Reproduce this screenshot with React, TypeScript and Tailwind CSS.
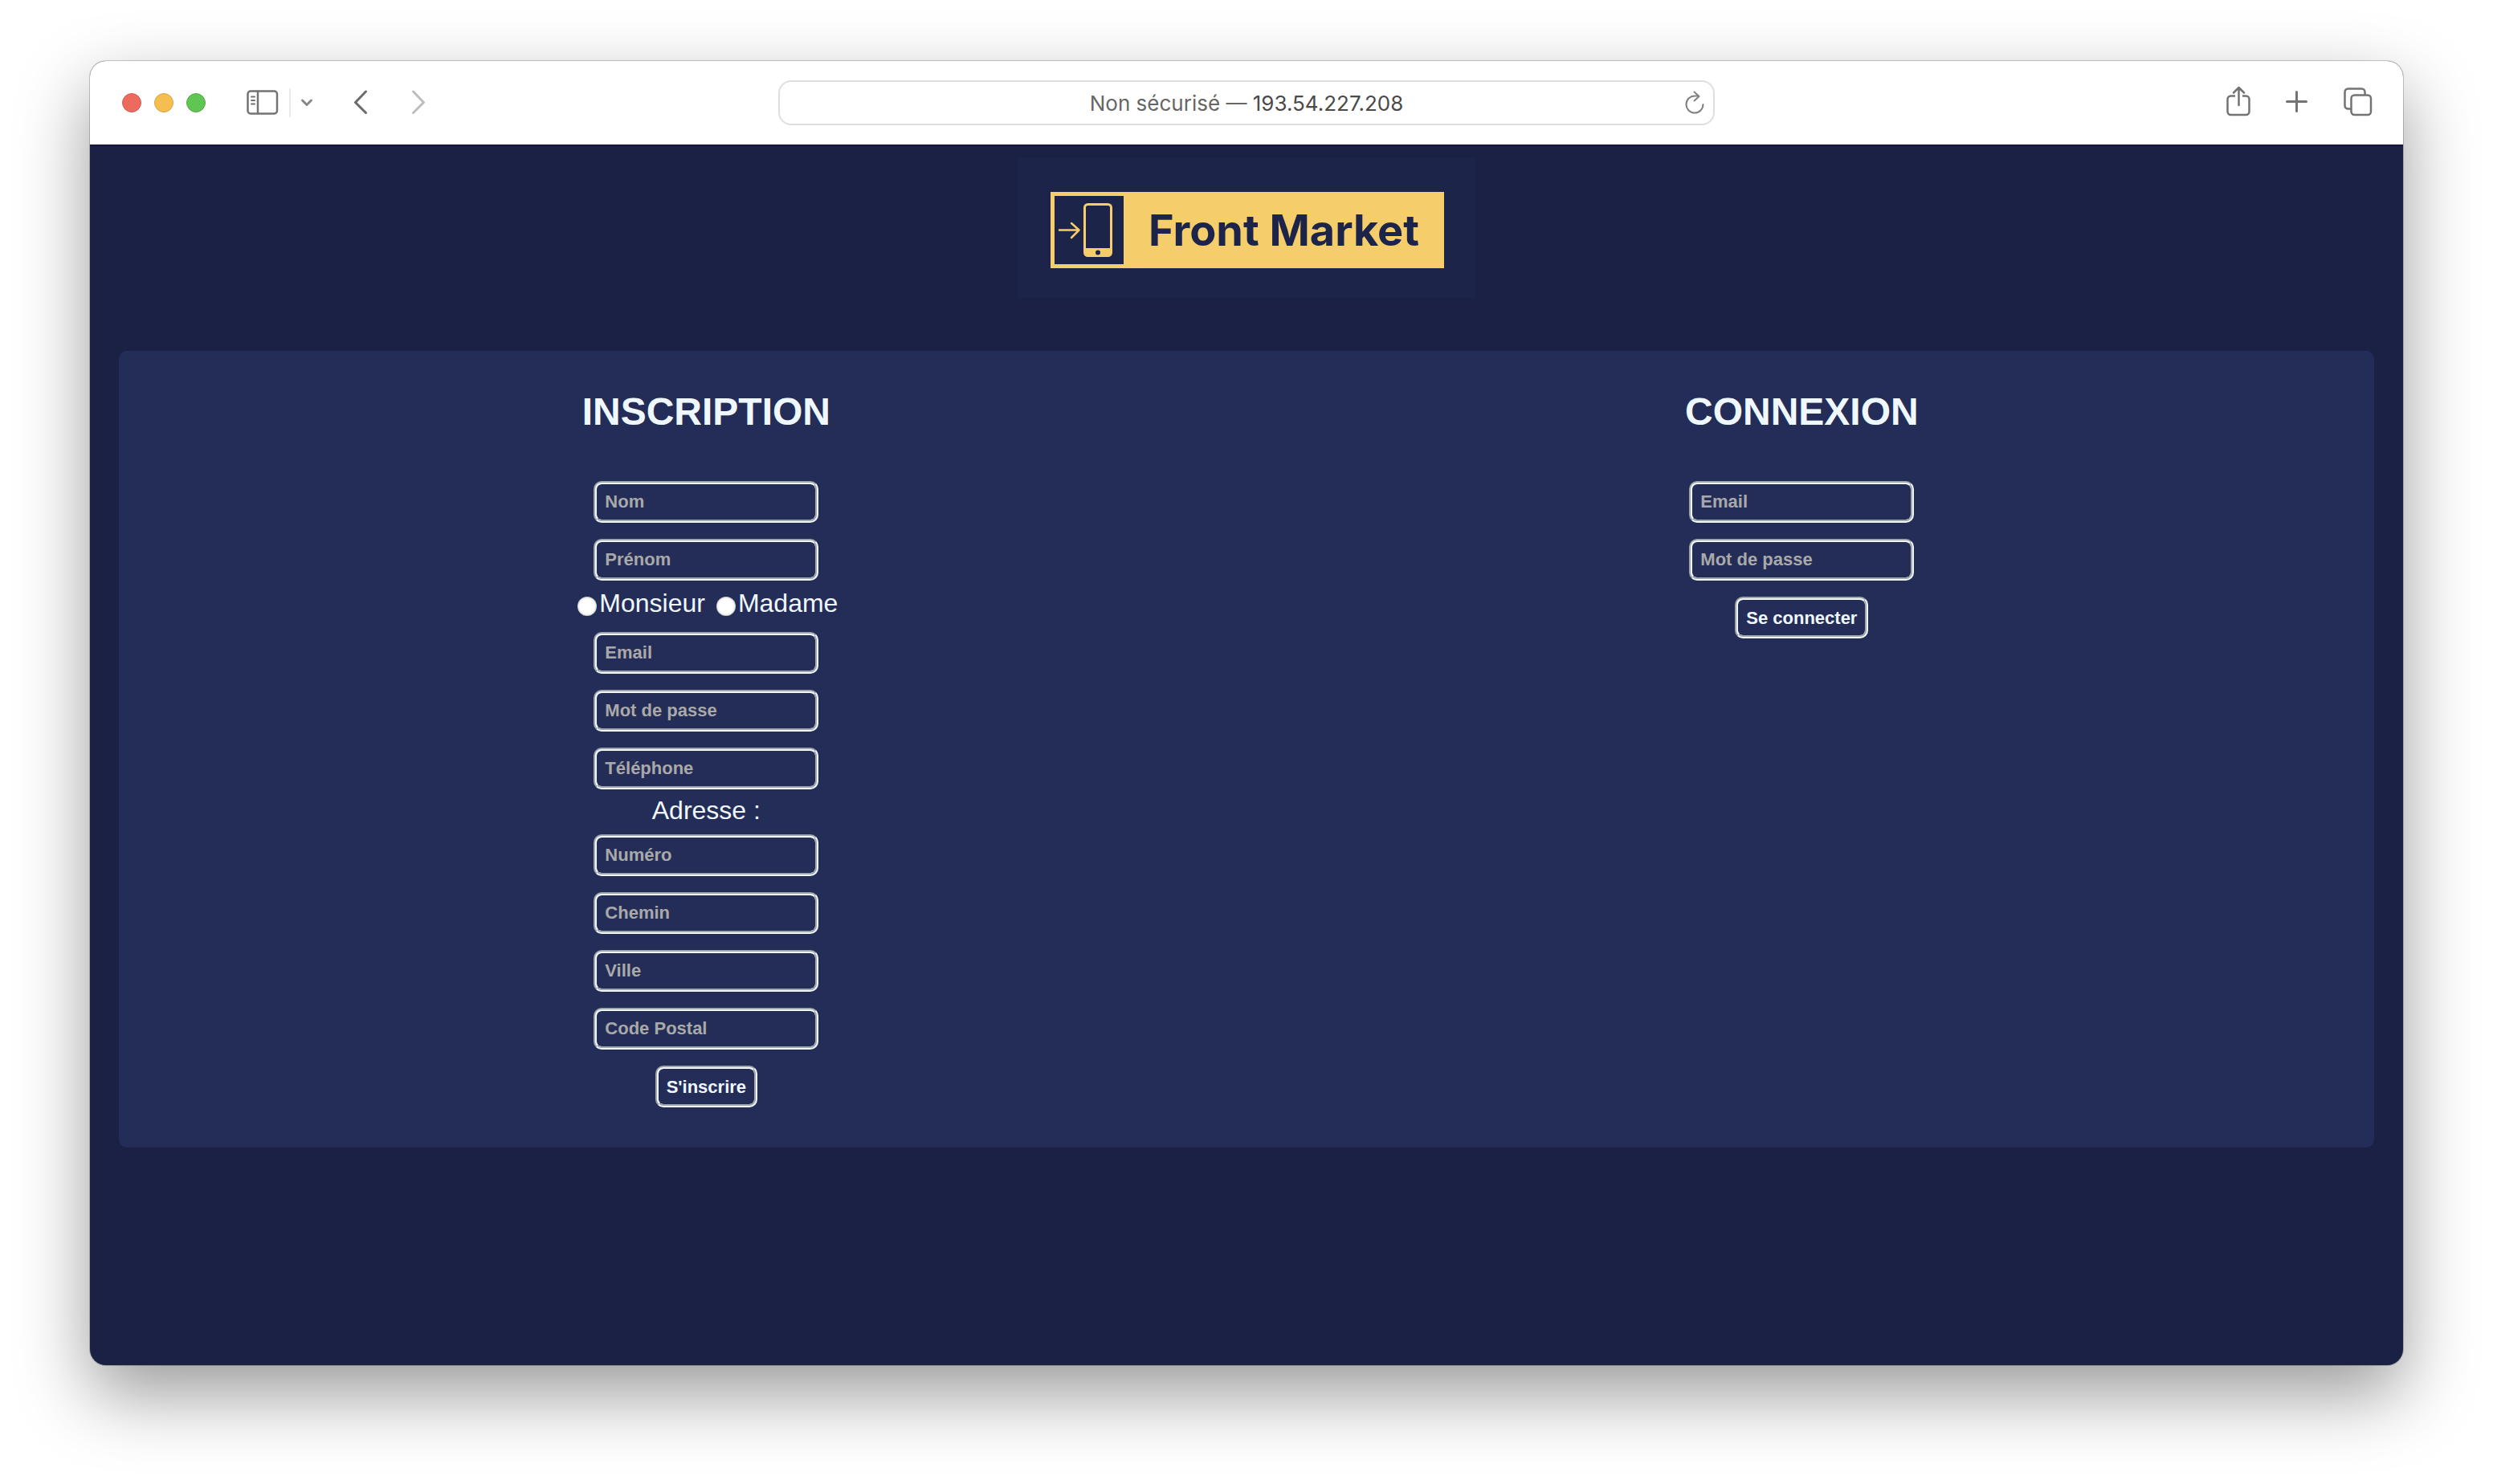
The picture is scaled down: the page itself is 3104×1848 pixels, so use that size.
function TextField({ label, type = "text" }: { label: string; type?: string }) {
  return (
    <input
      type={type}
      aria-label={label}
      placeholder={label}
      className="my-2.5 h-[52px] w-[280px] rounded-[10px] border-4 border-[aliceblue] bg-transparent px-2.5 text-[22px] font-bold text-[aliceblue] [border-style:groove] placeholder:text-[#a9a9a9] placeholder:opacity-100"
    />
  );
}

function SubmitButton({ children }: { children: string }) {
  return (
    <button
      type="submit"
      className="my-2.5 h-[52px] rounded-[10px] border-4 border-[aliceblue] px-2.5 text-[22px] font-bold text-[aliceblue] [border-style:groove]"
    >
      {children}
    </button>
  );
}

function RadioOption({ label }: { label: string }) {
  return (
    <label className="flex h-9 items-center gap-[3px]">
      <input
        type="radio"
        name="civilite"
        className="mt-2 size-6 appearance-none rounded-full bg-white shadow-[inset_0_0_3px_rgba(0,0,0,0.45)]"
      />
      {label}
    </label>
  );
}

function Toolbar() {
  return (
    <header className="grid h-[104px] grid-cols-[1fr_1166px_1fr] items-center bg-white text-[#737373]">
      <div className="flex items-center pl-10">
        <div className="flex gap-4">
          <span className="size-6 rounded-full border border-[#d35b50] bg-[#ec6a5e]" />
          <span className="size-6 rounded-full border border-[#d6a243] bg-[#f4bf4f]" />
          <span className="size-6 rounded-full border border-[#52a842] bg-[#61c554]" />
        </div>
        <button type="button" aria-label="Barre latérale" className="ml-[51px]">
          <svg width="40" height="32" viewBox="0 0 40 32" fill="none" stroke="currentColor" strokeWidth="2.5" strokeLinecap="round">
            <rect x="1.5" y="1.5" width="36.5" height="28" rx="3.5" />
            <path d="M14 2v27" />
            <path d="M6 8.5h4M6 13h4M6 17.500h4" strokeWidth="2" />
          </svg>
        </button>
        <span className="ml-[13px] h-9 w-0.5 bg-[#e9e9e9]" />
        <button type="button" aria-label="Groupes d'onglets" className="ml-3">
          <svg width="16" height="12" viewBox="0 0 16 12" fill="none" stroke="#88888b" strokeWidth="3" strokeLinecap="round" strokeLinejoin="round">
            <path d="M2.500 3L8 8.500 13.500 3" />
          </svg>
        </button>
        <button type="button" aria-label="Précédent" className="ml-[50px]">
          <svg width="18" height="32" viewBox="0 0 18 32" fill="none" stroke="#6b6b6b" strokeWidth="3" strokeLinecap="round" strokeLinejoin="round">
            <path d="M15.500 2L2.500 15.500 15.500 28.500" />
          </svg>
        </button>
        <button type="button" aria-label="Suivant" className="ml-[54px]">
          <svg width="18" height="32" viewBox="0 0 18 32" fill="none" stroke="#bdbdbd" strokeWidth="3" strokeLinecap="round" strokeLinejoin="round">
            <path d="M2.500 2L15.500 15.500 2.500 28.500" />
          </svg>
        </button>
      </div>

      <div className="grid h-14 grid-cols-[36px_1fr_36px] items-center rounded-[16px] border-2 border-[#dedede] font-['Inter'] text-[26px]">
        <p className="col-start-2 text-center text-[#666]">
          Non sécurisé — <span className="text-[#4a4a4a]">193.54.227.208</span>
        </p>
        <button type="button" aria-label="Recharger">
          <svg width="28" height="32" viewBox="0 0 28 32" fill="none" stroke="#808080" strokeWidth="2" strokeLinecap="round" strokeLinejoin="round">
            <path d="M23.500 18A10.500 10.500 0 1 1 13 7.500H18" />
            <path d="M12.500 2.500L18.500 8 12.500 13.500" />
          </svg>
        </button>
      </div>

      <div className="flex items-center justify-end pr-[38px]">
        <button type="button" aria-label="Partager">
          <svg width="32" height="44" viewBox="0 0 32 44" fill="none" stroke="currentColor" strokeWidth="2.500" strokeLinecap="round" strokeLinejoin="round">
            <path d="M11 13.500H5.500a4 4 0 0 0-4 4V33a4 4 0 0 0 4 4h19a4 4 0 0 0 4-4V17.500a4 4 0 0 0-4-4H20" strokeLinecap="butt" />
            <path d="M15.500 25V3M9 9.500l6.500-6.500 6.500 6.500" />
          </svg>
        </button>
        <button type="button" aria-label="Nouvel onglet" className="ml-[42px]">
          <svg width="28" height="30" viewBox="0 0 28 30" fill="none" stroke="currentColor" strokeWidth="3" strokeLinecap="round">
            <path d="M13.500 1.500v24M1.500 13.500h24" />
          </svg>
        </button>
        <button type="button" aria-label="Vue d'ensemble des onglets" className="ml-11">
          <svg width="36" height="38" viewBox="0 0 36 38" fill="none" stroke="currentColor" strokeWidth="2.500">
            <path d="M9 26.500H5.500a4 4 0 0 1-4-4v-17a4 4 0 0 1 4-4h17a4 4 0 0 1 4 4V9" />
            <rect x="9.500" y="9.500" width="24.500" height="24.500" rx="4" />
          </svg>
        </button>
      </div>
    </header>
  );
}

function Logo() {
  return (
    <a href="#" aria-label="Front Market" className="flex h-[175px] w-[570px] justify-end bg-[#1c2549] pt-[43px] pr-[39px]">
      <span className="flex h-[95px] w-[490px] items-center bg-[#f6cd6b] pl-[5px]">
        <span className="flex h-[85px] w-[86px] items-center justify-center bg-[#1c2549]">
          <svg width="86" height="85" viewBox="0 0 86 85" fill="none" stroke="#f6cd6b">
            <path d="M6 42.500H30M21 34l9.500 8.500L21 52" strokeWidth="2.500" strokeLinecap="round" strokeLinejoin="round" />
            <rect x="37.500" y="10.500" width="33" height="64" rx="4" strokeWidth="3" />
            <path d="M38 65h32v8a2 2 0 0 1-2 2H40a2 2 0 0 1-2-2z" fill="#f6cd6b" stroke="none" />
            <circle cx="54" cy="70.500" r="3" fill="#1c2549" stroke="none" />
          </svg>
        </span>
        <span className="flex-1 text-center font-['Inter'] text-[54px] leading-[60px] font-bold text-[#1c2549]">Front Market</span>
      </span>
    </a>
  );
}

export default function App() {
  return (
    <div className="min-h-screen bg-white px-28 pt-[76px] pb-[148px] font-['Liberation_Sans',Arial,sans-serif]">
      <div className="flex min-h-[1624px] flex-col overflow-hidden rounded-[20px] bg-[#1b2144] shadow-[0_0_0_1px_rgba(0,0,0,0.2),0_36px_90px_rgba(0,0,0,0.4)]">
        <Toolbar />
        <div className="border-t border-[#02031f] px-9">
          <div className="flex justify-center pt-[15px]">
            <Logo />
          </div>
          <main className="mt-[66px] flex justify-around rounded-[10px] bg-[#242d57] px-10 pb-10 text-[aliceblue]">
            <form className="flex flex-col items-center">
              <h1 className="my-12 text-5xl leading-[56px] font-bold">INSCRIPTION</h1>
              <TextField label="Nom" />
              <TextField label="Prénom" />
              <div className="flex h-11 gap-3.5 pl-1 text-[32px] leading-9">
                <RadioOption label="Monsieur" />
                <RadioOption label="Madame" />
              </div>
              <TextField label="Email" type="email" />
              <TextField label="Mot de passe" type="password" />
              <TextField label="Téléphone" type="tel" />
              <p className="mb-1 text-[32px] leading-8">Adresse :</p>
              <TextField label="Numéro" />
              <TextField label="Chemin" />
              <TextField label="Ville" />
              <TextField label="Code Postal" />
              <SubmitButton>S'inscrire</SubmitButton>
            </form>
            <form className="flex flex-col items-center">
              <h1 className="my-12 text-5xl leading-[56px] font-bold">CONNEXION</h1>
              <TextField label="Email" type="email" />
              <TextField label="Mot de passe" type="password" />
              <SubmitButton>Se connecter</SubmitButton>
            </form>
          </main>
        </div>
      </div>
    </div>
  );
}
